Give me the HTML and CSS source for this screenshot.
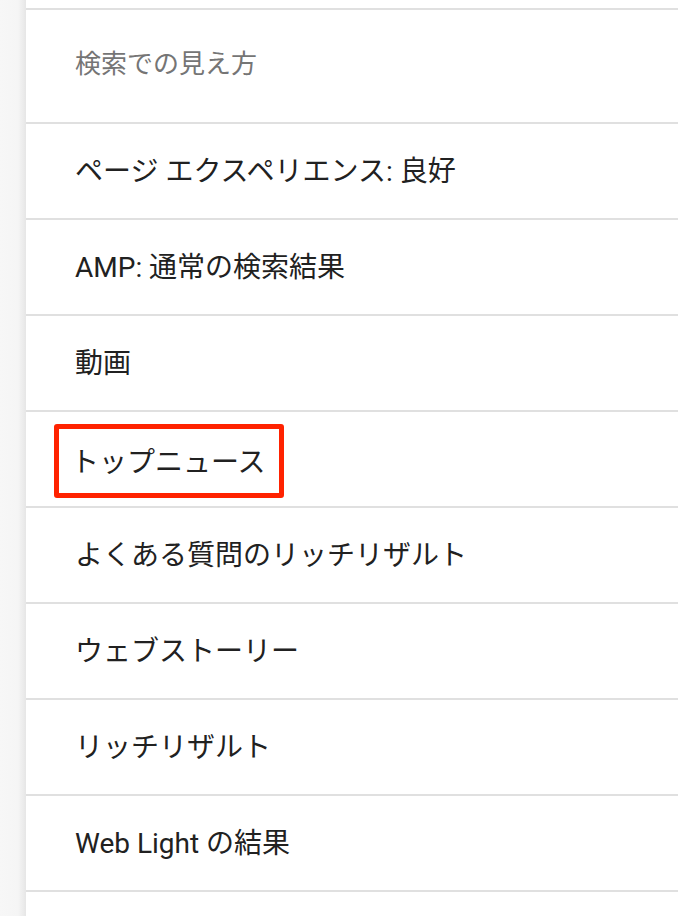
FILE: index.html
```html
<!doctype html>
<html lang="ja">
<head>
  <meta charset="UTF-8">
  <meta name="viewport" content="width=device-width, initial-scale=1.0">
  <title>検索での見え方</title>
  <link rel="stylesheet" href="styles.css">
</head>
<body>
  <div class="page">
    <div class="rail"></div>

    <div class="panel">
      <div class="top"></div>

      <div class="row row-head">検索での見え方</div>
      <div class="row">ページ エクスペリエンス: 良好</div>
      <div class="row">AMP: 通常の検索結果</div>
      <div class="row">動画</div>
      <div class="row row-marked">
        <span class="mark">トップニュース</span>
      </div>
      <div class="row">よくある質問のリッチリザルト</div>
      <div class="row">ウェブストーリー</div>
      <div class="row">リッチリザルト</div>
      <div class="row">Web Light の結果</div>
    </div>
  </div>
</body>
</html>
```

FILE: styles.css
```css
*{
  box-sizing: border-box;
}

body{
  margin: 0;
  color: #212121;
  font-family: Roboto, "Noto Sans CJK JP", sans-serif;
  background-color: #f7f7f7;
  overflow: hidden;
}

.page{
  display: flex;
  height: 916px;
}

.rail{
  flex: 0 0 26px;
  background: linear-gradient(to right, #f7f7f7 0, #f5f5f5 18px, #e6e6e6 26px);
}

.panel{
  flex: 1;
  background: #fff;
}

.top{
  height: 10px;
  border-bottom: 2px solid #e0e0e0;
}

.row{
  display: flex;
  align-items: center;
  height: 96px;
  padding-left: 49px;
  padding-bottom: 4px;
  font-size: 28px;
  border-bottom: 2px solid #e0e0e0;
}

.row-head{
  height: 114px;
  padding-bottom: 10px;
  color: #757575;
  font-size: 26px;
}

.row-marked{
  padding-left: 28px;
  padding-top: 4px;
  padding-bottom: 0;
}

.mark{
  padding: 11px 13px 13px 12px;
  border: 5px solid #ff2200;
  border-radius: 3px;
}
```
